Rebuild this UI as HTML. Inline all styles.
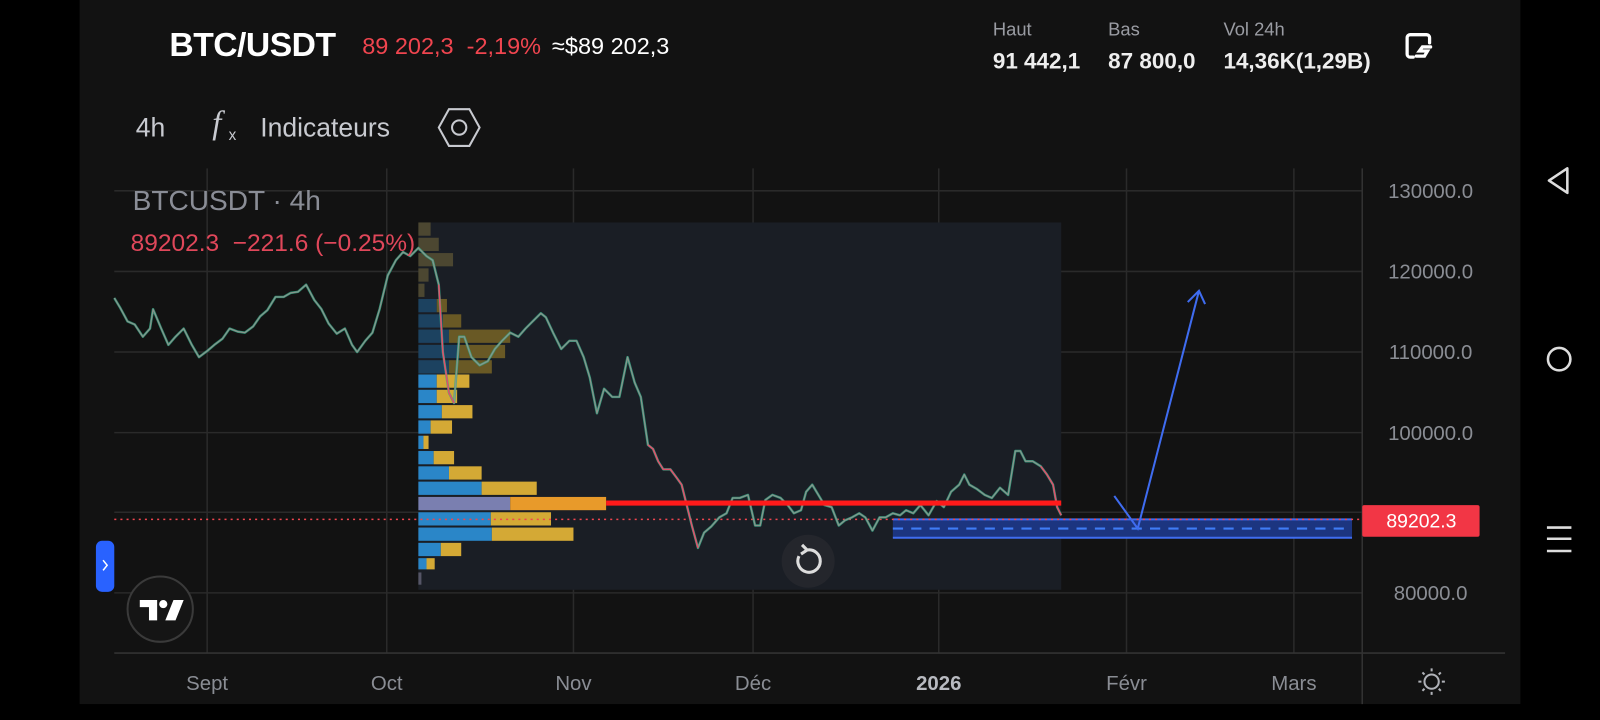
<!DOCTYPE html>
<html><head><meta charset="utf-8"><style>
html,body{margin:0;padding:0;background:#000;width:1600px;height:720px;overflow:hidden}
#w{position:absolute;left:0;top:0;width:1568px;height:706px;transform:scale(1.0204);transform-origin:0 0;font-family:"Liberation Sans",sans-serif}
#app{position:absolute;left:78px;top:0;width:1412px;height:690px;background:#121212}
.t{position:absolute;white-space:nowrap}
</style></head><body><div id="w">
<div id="app"></div>
<div class="t" style="left:166px;top:25px;font-size:33px;font-weight:bold;color:#fff;letter-spacing:-0.5px">BTC/USDT</div>
<div class="t" style="left:355px;top:32px;font-size:23px;color:#f0454f">89 202,3&nbsp; -2,19%</div>
<div class="t" style="left:541px;top:32px;font-size:23px;color:#fff">≈$89 202,3</div>
<div class="t" style="left:973px;top:19px;font-size:18px;color:#9a9ca3">Haut</div>
<div class="t" style="left:1086px;top:19px;font-size:18px;color:#9a9ca3">Bas</div>
<div class="t" style="left:1199px;top:19px;font-size:18px;color:#9a9ca3">Vol 24h</div>
<div class="t" style="left:973px;top:47px;font-size:22px;color:#eee;font-weight:bold">91 442,1</div>
<div class="t" style="left:1086px;top:47px;font-size:22px;color:#eee;font-weight:bold">87 800,0</div>
<div class="t" style="left:1199px;top:47px;font-size:22px;color:#eee;font-weight:bold">14,36K(1,29B)</div>
<svg style="position:absolute;left:1375px;top:30px" width="32" height="32" viewBox="0 0 32 32" fill="none" stroke="#fff" stroke-width="3.2" stroke-linecap="round"><path d="M10 26H7a3 3 0 0 1-3-3V7a3 3 0 0 1 3-3h16a3 3 0 0 1 3 3v5"/><path d="M27 16h-8l-3 4h8l-3 5h-8"/></svg>
<div class="t" style="left:133px;top:110px;font-size:26px;color:#c8cad0">4h</div>
<div class="t" style="left:208px;top:102px;font-size:32px;color:#c8cad0;font-family:'Liberation Serif',serif;font-style:italic">f</div>
<div class="t" style="left:224px;top:124px;font-size:15px;color:#c8cad0">x</div>
<div class="t" style="left:255px;top:110px;font-size:26px;color:#c8cad0">Indicateurs</div>
<svg style="position:absolute;left:428px;top:104px" width="44" height="42" viewBox="0 0 44 42" fill="none" stroke="#c8cad0" stroke-width="2"><path d="M12 3h20l10 18-10 18H12L2 21z"/><circle cx="22" cy="21" r="7"/></svg>
<svg style="position:absolute;left:0;top:0" width="1568" height="706">
<g stroke="#2a2a2a" stroke-width="1.5">
<line x1="203" y1="165" x2="203" y2="640"/><line x1="379" y1="165" x2="379" y2="640"/><line x1="562" y1="165" x2="562" y2="640"/><line x1="738" y1="165" x2="738" y2="640"/><line x1="920" y1="165" x2="920" y2="640"/><line x1="1104" y1="165" x2="1104" y2="640"/><line x1="1268" y1="165" x2="1268" y2="640"/>
<line x1="112" y1="187" x2="1335" y2="187"/><line x1="112" y1="266" x2="1335" y2="266"/><line x1="112" y1="345" x2="1335" y2="345"/><line x1="112" y1="424" x2="1335" y2="424"/><line x1="112" y1="502" x2="1335" y2="502"/><line x1="112" y1="581" x2="1335" y2="581"/>
</g>
<line x1="112" y1="640" x2="1475" y2="640" stroke="#333" stroke-width="1.5"/>
<line x1="1335" y1="165" x2="1335" y2="690" stroke="#333" stroke-width="1.5"/>
<rect x="410" y="218" width="630" height="360" fill="#1a1e25"/>
<g opacity="0.45">
<rect x="410" y="218" width="12" height="13" fill="#8a7a40"/><rect x="410" y="233" width="20" height="13" fill="#8a7a40"/><rect x="410" y="248" width="34" height="13" fill="#8a7a40"/><rect x="410" y="263" width="10" height="13" fill="#8a7a40"/><rect x="410" y="278" width="6" height="13" fill="#8a7a40"/>
<rect x="410" y="293" width="18" height="13" fill="#1f6fa8"/><rect x="428" y="293" width="10" height="13" fill="#c9a227"/>
<rect x="410" y="308" width="24" height="13" fill="#1f6fa8"/><rect x="434" y="308" width="18" height="13" fill="#c9a227"/>
<rect x="410" y="323" width="30" height="13" fill="#1f6fa8"/><rect x="440" y="323" width="60" height="13" fill="#c9a227"/>
<rect x="410" y="338" width="40" height="13" fill="#1f6fa8"/><rect x="450" y="338" width="45" height="13" fill="#c9a227"/>
<rect x="410" y="353" width="30" height="13" fill="#1f6fa8"/><rect x="440" y="353" width="42" height="13" fill="#c9a227"/>
</g>
<g>
<rect x="410" y="367" width="18" height="13" fill="#2a86c8"/><rect x="428" y="367" width="32" height="13" fill="#d4a935"/>
<rect x="410" y="382" width="18" height="13" fill="#2a86c8"/><rect x="428" y="382" width="20" height="13" fill="#d4a935"/>
<rect x="410" y="397" width="23" height="13" fill="#2a86c8"/><rect x="433" y="397" width="30" height="13" fill="#d4a935"/>
<rect x="410" y="412" width="12" height="13" fill="#2a86c8"/><rect x="422" y="412" width="21" height="13" fill="#d4a935"/>
<rect x="410" y="427" width="5" height="13" fill="#2a86c8"/><rect x="415" y="427" width="5" height="13" fill="#d4a935"/>
<rect x="410" y="442" width="15" height="13" fill="#2a86c8"/><rect x="425" y="442" width="20" height="13" fill="#d4a935"/>
<rect x="410" y="457" width="30" height="13" fill="#2a86c8"/><rect x="440" y="457" width="32" height="13" fill="#d4a935"/>
<rect x="410" y="472" width="62" height="13" fill="#2a86c8"/><rect x="472" y="472" width="54" height="13" fill="#d4a935"/>
<rect x="410" y="487" width="90" height="13" fill="#7a7fb0"/><rect x="500" y="487" width="94" height="13" fill="#e89a2a"/>
<rect x="410" y="502" width="71" height="13" fill="#2a86c8"/><rect x="481" y="502" width="59" height="13" fill="#d4a935"/>
<rect x="410" y="517" width="72" height="13" fill="#2a86c8"/><rect x="482" y="517" width="80" height="13" fill="#d4a935"/>
<rect x="410" y="532" width="22" height="13" fill="#2a86c8"/><rect x="432" y="532" width="20" height="13" fill="#d4a935"/>
<rect x="410" y="547" width="8" height="11" fill="#2a86c8"/><rect x="418" y="547" width="8" height="11" fill="#d4a935"/>
<rect x="410" y="561" width="3" height="12" fill="#556"/>
</g>
<rect x="875" y="509" width="450" height="18" fill="#1c3580"/>
<line x1="875" y1="509" x2="1325" y2="509" stroke="#3f6cf0" stroke-width="2"/>
<line x1="875" y1="527" x2="1325" y2="527" stroke="#3f6cf0" stroke-width="2"/>
<line x1="875" y1="518" x2="1325" y2="518" stroke="#3f7cf5" stroke-width="2" stroke-dasharray="10 8"/>
<line x1="112" y1="509" x2="1335" y2="509" stroke="#f0454f" stroke-width="1.5" stroke-dasharray="2 4"/>
<g transform="translate(0,-215)" fill="none" stroke-linejoin="round">
<polyline stroke="#2fae8a" stroke-width="2.4" opacity="0.8" points="112,507 118,517 125,530 132,533 140,545 147,537 150,518 158,537 165,553 172,545 180,537 188,553 195,565 203,559 210,553 218,547 225,537 233,540 240,541 248,535 255,525 262,519 270,506 278,506 285,502 292,501 300,494 308,509 315,518 322,532 330,542 338,537 345,553 350,560 358,549 365,541 372,518 380,485 388,470 395,462 402,466 410,458 418,466 424,470 430,494 434,560 440,600 445,610 450,545 455,545 462,565 470,573 478,569 485,557 492,549 500,541 508,545 515,537 522,530 530,522 535,526 542,541 550,557 558,549 565,549 572,565 578,585 585,620 592,596 600,604 607,604 615,565 622,590 628,604 635,651 640,655 645,667 650,675 657,675 663,683 668,690 672,706 678,730 684,752 690,737 697,731 705,722 712,718 718,703 725,703 733,700 740,730 745,730 750,705 757,700 765,703 772,710 778,718 785,715 790,697 796,690 802,700 808,710 815,712 822,730 828,725 835,722 842,718 848,722 855,735 862,722 868,722 875,718 882,720 888,715 895,718 902,710 910,720 918,706 925,712 932,697 940,690 945,680 950,690 957,694 965,700 972,703 980,693 988,700 995,657 1000,657 1005,667 1012,667 1020,672 1026,680 1032,690 1036,712 1040,720"/>
<polyline stroke="#8a948c" stroke-width="1.2" points="112,507 118,517 125,530 132,533 140,545 147,537 150,518 158,537 165,553 172,545 180,537 188,553 195,565 203,559 210,553 218,547 225,537 233,540 240,541 248,535 255,525 262,519 270,506 278,506 285,502 292,501 300,494 308,509 315,518 322,532 330,542 338,537 345,553 350,560 358,549 365,541 372,518 380,485 388,470 395,462 402,466 410,458 418,466 424,470 430,494 434,560 440,600 445,610 450,545 455,545 462,565 470,573 478,569 485,557 492,549 500,541 508,545 515,537 522,530 530,522 535,526 542,541 550,557 558,549 565,549 572,565 578,585 585,620 592,596 600,604 607,604 615,565 622,590 628,604 635,651 640,655 645,667 650,675 657,675 663,683 668,690 672,706 678,730 684,752 690,737 697,731 705,722 712,718 718,703 725,703 733,700 740,730 745,730 750,705 757,700 765,703 772,710 778,718 785,715 790,697 796,690 802,700 808,710 815,712 822,730 828,725 835,722 842,718 848,722 855,735 862,722 868,722 875,718 882,720 888,715 895,718 902,710 910,720 918,706 925,712 932,697 940,690 945,680 950,690 957,694 965,700 972,703 980,693 988,700 995,657 1000,657 1005,667 1012,667 1020,672 1026,680 1032,690 1036,712 1040,720"/>
<polyline stroke="#e0506a" stroke-width="1.5" points="430,494 434,560 440,600 445,610"/>
<polyline stroke="#e0506a" stroke-width="1.5" points="635,651 640,655 645,667 650,675 657,675 663,683 668,690 672,706 678,730 684,752"/>
<polyline stroke="#e0506a" stroke-width="1.5" points="1020,672 1026,680 1032,690 1036,712 1040,720"/>
</g>
<line x1="594" y1="493" x2="1040" y2="493" stroke="#ff1a1a" stroke-width="5"/>
<polyline fill="none" stroke="#3f6cf0" stroke-width="2" points="1092,486 1115,518 1175,285"/>
<polyline fill="none" stroke="#3f6cf0" stroke-width="2" points="1164,296 1175,285 1181,298"/>
<rect x="1335" y="495" width="115" height="31" rx="2" fill="#f23645"/>
<text x="1393" y="517" font-size="19" fill="#fff" text-anchor="middle" font-family="Liberation Sans">89202.3</text>
<g font-size="20" fill="#8a8d94" font-family="Liberation Sans" text-anchor="middle">
<text x="1402" y="194">130000.0</text><text x="1402" y="273">120000.0</text><text x="1402" y="352">110000.0</text><text x="1402" y="431">100000.0</text><text x="1402" y="588">80000.0</text>
<text x="203" y="676">Sept</text><text x="379" y="676">Oct</text><text x="562" y="676">Nov</text><text x="738" y="676">Déc</text><text x="920" y="676" font-weight="bold" fill="#b8bac0">2026</text><text x="1104" y="676">Févr</text><text x="1268" y="676">Mars</text>
</g>
<g stroke="#b0b2b8" stroke-width="2" fill="none"><circle cx="1403" cy="668" r="7"/><path d="M1403 655v3M1403 678v3M1390 668h3M1413 668h3M1394 659l2 2M1410 675l2 2M1394 677l2-2M1410 661l2-2"/></g>
<circle cx="792" cy="550" r="26" fill="#24262c"/>
<path d="M783 545a11 11 0 1 0 8-6" stroke="#ddd" stroke-width="3" fill="none"/><path d="M786 534l5 5-6 4" stroke="#ddd" stroke-width="3" fill="none"/>
<rect x="94" y="530" width="18" height="50" rx="6" fill="#2962ff"/>
<path d="M101 549l4 5-4 5" stroke="#fff" stroke-width="1.5" fill="none"/>
<circle cx="157" cy="597" r="32" fill="#151515" stroke="#3a3a3a" stroke-width="2"/>
<path d="M137 588h17v20h-8v-13h-9z M162 608l8-20h10l-8 20z" fill="#fff"/><circle cx="160" cy="592" r="4" fill="#fff"/>
<path d="M1536 165v24l-18-12z" fill="none" stroke="#ddd" stroke-width="2.5" stroke-linejoin="round"/>
<circle cx="1528" cy="352" r="11" fill="none" stroke="#ddd" stroke-width="2.5"/>
<path d="M1516 517h24M1516 528h24M1516 540h24" stroke="#ddd" stroke-width="2.5"/>
</svg>
<div class="t" style="left:130px;top:181px;font-size:27.5px;color:#8a8d96">BTCUSDT · 4h</div>
<div class="t" style="left:128px;top:225px;font-size:24px;color:#e0475a">89202.3&nbsp; −221.6 (−0.25%)</div>
</div></body></html>
